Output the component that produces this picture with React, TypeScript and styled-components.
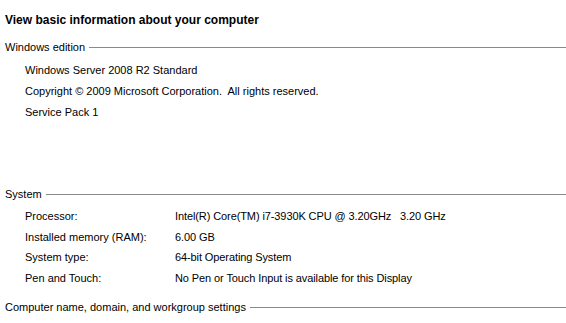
import React from 'react'
import styled, { createGlobalStyle } from 'styled-components'

const GlobalStyle = createGlobalStyle`
  body {
    margin: 0;
    background: #ffffff;
    color: #000000;
    font-family: "Liberation Sans", Arial, sans-serif;
    font-size: 11px;
  }
`

const Page = styled.div`
  display: flex;
  flex-direction: column;
  padding-top: 13px;
`

const Title = styled.div`
  padding-left: 5px;
  font-weight: bold;
  font-size: 12px;
  line-height: 14px;
`

const Section = styled.div<{ top: number; minHeight?: number }>`
  display: flex;
  flex-direction: column;
  margin-top: ${({ top }) => top}px;
  min-height: ${({ minHeight }) => (minHeight ? `${minHeight}px` : 'auto')};
`

const SectionHeader = styled.div`
  display: flex;
  align-items: center;
  gap: 4px;
  padding-left: 5px;
  line-height: 14px;
  white-space: nowrap;
`

const HeaderRule = styled.div`
  flex: 1;
  height: 1px;
  background: #8a8a8a;
`

const Rows = styled.div<{ gapTop: number }>`
  display: flex;
  flex-direction: column;
  padding-top: ${({ gapTop }) => gapTop}px;
`

const Row = styled.div<{ h: number }>`
  display: grid;
  grid-template-columns: 150px 1fr;
  padding-left: 25px;
  height: ${({ h }) => h}px;
  line-height: ${({ h }) => h}px;
  white-space: pre;
`

const Value = styled.span`
  letter-spacing: -0.1px;
`

const edition = [
  'Windows Server 2008 R2 Standard',
  'Copyright \u00a9 2009 Microsoft Corporation.  All rights reserved.',
  'Service Pack 1'
]

const system: [string, string][] = [
  ['Processor:', 'Intel(R) Core(TM) i7-3930K CPU @ 3.20GHz   3.20 GHz'],
  ['Installed memory (RAM):', '6.00 GB'],
  ['System type:', '64-bit Operating System'],
  ['Pen and Touch:', 'No Pen or Touch Input is available for this Display']
]

export default function App() {
  return (
    <>
      <GlobalStyle />
      <Page>
        <Title>View basic information about your computer</Title>
        <Section top={13} minHeight={147}>
          <SectionHeader>
            Windows edition
            <HeaderRule />
          </SectionHeader>
          <Rows gapTop={6}>
            {edition.map(line => (
              <Row key={line} h={21}>
                <span>{line}</span>
              </Row>
            ))}
          </Rows>
        </Section>
        <Section top={0}>
          <SectionHeader>
            System
            <HeaderRule />
          </SectionHeader>
          <Rows gapTop={5}>
            {system.map(([label, value]) => (
              <Row key={label} h={20.5}>
                <span>{label}</span>
                <Value>{value}</Value>
              </Row>
            ))}
          </Rows>
        </Section>
        <Section top={12}>
          <SectionHeader>
            Computer name, domain, and workgroup settings
            <HeaderRule />
          </SectionHeader>
        </Section>
      </Page>
    </>
  )
}
